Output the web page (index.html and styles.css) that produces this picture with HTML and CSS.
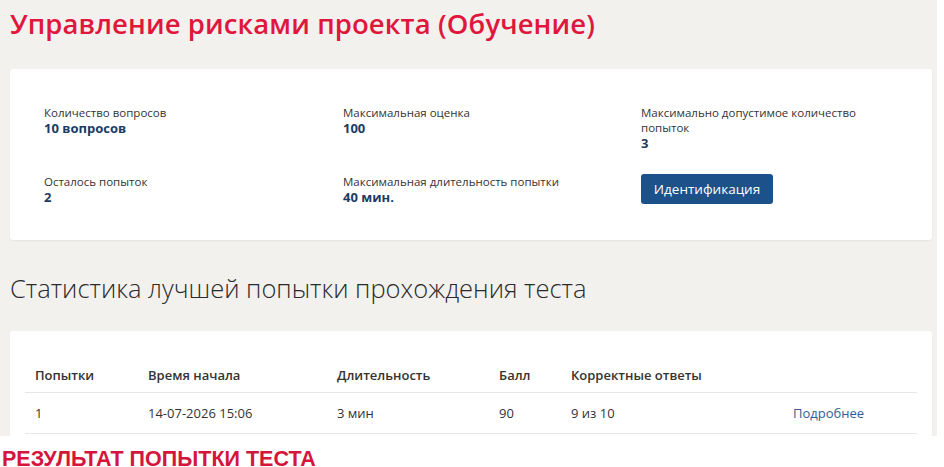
FILE: index.html
```html
<!DOCTYPE html>
<html lang="ru">
<head>
<meta charset="utf-8">
<title>Управление рисками проекта (Обучение)</title>
<link rel="stylesheet" href="styles.css">
</head>
<body>
<div class="page">
  <h1 class="title">Управление рисками проекта (Обучение)</h1>
  <div class="card info-card">
    <div class="info-grid">
      <div class="info-item">
        <div class="info-label">Количество вопросов</div>
        <div class="info-value">10 вопросов</div>
      </div>
      <div class="info-item">
        <div class="info-label">Максимальная оценка</div>
        <div class="info-value">100</div>
      </div>
      <div class="info-item">
        <div class="info-label narrow">Максимально допустимое количество попыток</div>
        <div class="info-value">3</div>
      </div>
      <div class="info-item">
        <div class="info-label">Осталось попыток</div>
        <div class="info-value">2</div>
      </div>
      <div class="info-item">
        <div class="info-label">Максимальная длительность попытки</div>
        <div class="info-value">40 мин.</div>
      </div>
      <div class="info-item">
        <button class="btn">Идентификация</button>
      </div>
    </div>
  </div>
  <h2 class="section-title">Статистика лучшей попытки прохождения теста</h2>
  <div class="card table-card">
    <table class="stats">
      <thead>
        <tr>
          <th class="c1">Попытки</th>
          <th class="c2">Время начала</th>
          <th class="c3">Длительность</th>
          <th class="c4">Балл</th>
          <th class="c5">Корректные ответы</th>
          <th class="c6"></th>
        </tr>
      </thead>
      <tbody>
        <tr>
          <td>1</td>
          <td>14-07-2026 15:06</td>
          <td>3 мин</td>
          <td>90</td>
          <td>9 из 10</td>
          <td><a class="link" href="#">Подробнее</a></td>
        </tr>
      </tbody>
    </table>
  </div>
</div>
<h3 class="result-title">РЕЗУЛЬТАТ ПОПЫТКИ ТЕСТА</h3>
</body>
</html>
```
FILE: styles.css
```css
html, body {
  margin: 0;
  padding: 0;
  background: #ffffff;
}
body {
  font-family: "Open Sans", "Liberation Sans", sans-serif;
  color: #333333;
  width: 944px;
  height: 467px;
  overflow: hidden;
}
.page {
  background: #f2f1ee;
  width: 937px;
  height: 436px;
  overflow: hidden;
  box-sizing: border-box;
  padding: 0 5px 0 10px;
}
.title {
  margin: 0;
  padding-top: 5px;
  height: 69px;
  box-sizing: border-box;
  font-size: 27.5px;
  font-weight: 600;
  color: #e0173d;
  line-height: 38px;
  letter-spacing: 0.1px;
}
.card {
  background: #ffffff;
  border-radius: 3px;
  box-shadow: 0 1px 2px rgba(0, 0, 0, 0.06);
}
.info-card {
  height: 171px;
  box-sizing: border-box;
  padding: 36px 0 0 34px;
}
.info-grid {
  display: grid;
  grid-template-columns: 299px 298px 260px;
  row-gap: 23px;
}
.info-label {
  font-size: 11.5px;
  line-height: 15px;
  color: #333333;
}
.info-label.narrow {
  max-width: 230px;
}
.info-value {
  font-size: 13px;
  line-height: 16px;
  font-weight: 700;
  color: #1c3b63;
}
.btn {
  display: block;
  font-family: "Open Sans", "Liberation Sans", sans-serif;
  font-size: 13.5px;
  font-weight: 400;
  color: #ffffff;
  background: #1d5189;
  border: none;
  border-radius: 3px;
  width: 132px;
  height: 30px;
  padding: 0;
  margin-top: 0;
}
.section-title {
  margin: 0;
  height: 91px;
  box-sizing: border-box;
  padding-top: 31px;
  font-size: 25.5px;
  font-weight: 300;
  line-height: 34px;
  color: #2b2b2b;
}
.table-card {
  height: 120px;
  box-sizing: border-box;
  padding: 27px 15px 0 15px;
}
.stats {
  width: 892px;
  border-collapse: collapse;
  font-size: 13px;
  color: #333333;
}
.stats th {
  text-align: left;
  font-weight: 600;
  height: 34px;
  padding: 0 0 0 10px;
  border-bottom: 1px solid #e6e6e6;
  vertical-align: middle;
}
.stats td {
  height: 40px;
  padding: 0 0 0 10px;
  border-bottom: 1px solid #e6e6e6;
  vertical-align: middle;
}
.c1 { width: 103px; }
.c2 { width: 179px; }
.c3 { width: 152px; }
.c4 { width: 62px; }
.c5 { width: 212px; }
.link {
  color: #2e5f93;
  text-decoration: none;
}
.result-title {
  margin: 0;
  padding: 12px 0 0 2px;
  font-family: "Liberation Sans", Arial, sans-serif;
  font-size: 21.5px;
  font-weight: 700;
  line-height: 22px;
  color: #d5153b;
}
```
